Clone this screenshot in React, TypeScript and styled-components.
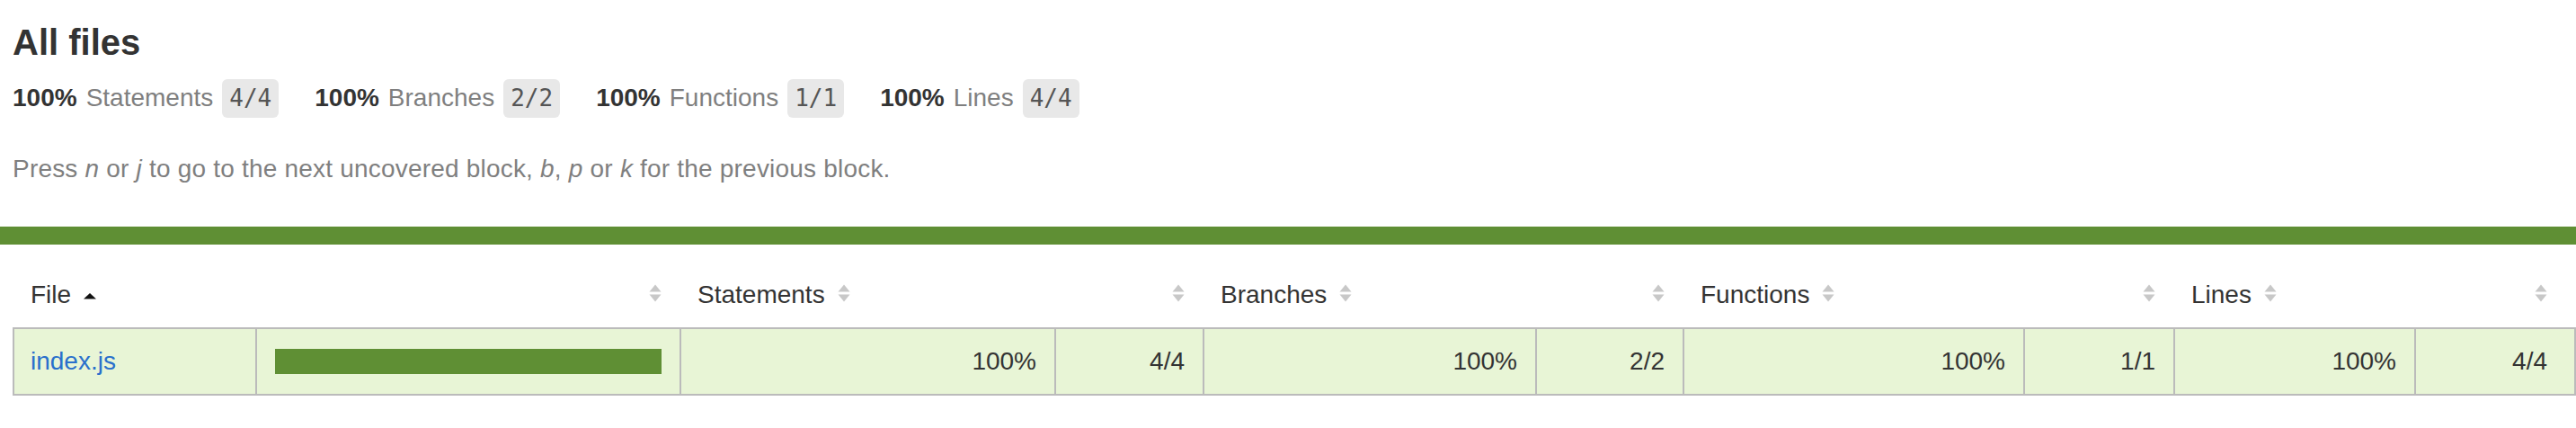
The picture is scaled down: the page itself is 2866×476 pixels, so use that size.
import React from "react";
import styled, { createGlobalStyle } from "styled-components";

const GREEN = "rgb(95,143,52)";
const ROW_BG = "rgb(232,245,214)";
const BORDER = "#bbb";
const COLS = "270px 472px 417px 165px 370px 164px 379px 167px 268px 166px";

const GlobalStyle = createGlobalStyle`
  html, body { margin: 0; padding: 0; background: #fff; }
  body {
    font-family: "Liberation Sans", Arial, Helvetica, sans-serif;
    font-size: 28px;
    line-height: 32px;
    color: #333;
  }
  *, *::before, *::after { box-sizing: border-box; }
`;

const Page = styled.div`
  width: 2866px;
`;

const Summary = styled.div`
  padding: 24px 14px 0 14px;
`;

const Title = styled.h1`
  margin: 0;
  font-size: 40px;
  line-height: 46px;
  font-weight: bold;
  color: #333;
`;

const StatsRow = styled.div`
  display: flex;
  gap: 40px;
  margin-top: 18px;
`;

const StatGroup = styled.div`
  display: flex;
  align-items: baseline;
`;

const StatPct = styled.span`
  font-weight: bold;
  color: #333;
`;

const StatLabel = styled.span`
  margin-left: 10px;
  color: rgb(127, 127, 127);
`;

const Fraction = styled.span`
  margin-left: 10px;
  display: inline-block;
  height: 43px;
  line-height: 43px;
  padding: 0 8px;
  font-family: "DejaVu Sans Mono", "Liberation Mono", monospace;
  font-size: 26px;
  color: #555;
  background: #e8e8e8;
  border-radius: 6px;
`;

const Hint = styled.p`
  margin: 41px 0 0 0;
  color: rgb(127, 127, 127);
  letter-spacing: 0.2px;
  em { font-style: italic; }
`;

const StatusLine = styled.div`
  margin-top: 48px;
  height: 20px;
  background: ${GREEN};
`;

const TableSection = styled.div`
  padding: 20px 0 0 14px;
`;

const HeaderRow = styled.div`
  display: grid;
  grid-template-columns: ${COLS};
  padding: 0 2px;
`;

const HeaderCell = styled.div<{ $align: "left" | "right"; $last?: boolean }>`
  padding: 20px ${(p) => (p.$last ? 20 : 22)}px 20px 18px;
  text-align: ${(p) => p.$align};
  white-space: nowrap;
  color: #333;
`;

const BodyRow = styled.div`
  display: grid;
  grid-template-columns: ${COLS};
  border: 2px solid ${BORDER};
  background: ${ROW_BG};
`;

const Cell = styled.div<{ $align: "left" | "right"; $first?: boolean }>`
  padding: 20px 20px 20px ${(p) => (p.$first ? 18 : 20)}px;
  text-align: ${(p) => p.$align};
  white-space: nowrap;
  border-right: 2px solid ${BORDER};
  &:last-child { border-right: none; }
`;

const FileLink = styled.a`
  color: rgb(42, 112, 204);
  text-decoration: none;
`;

const CoverFill = styled.div`
  margin-top: 2px;
  height: 28px;
  background: ${GREEN};
`;

const SorterIcon = styled.svg`
  display: inline-block;
  margin-left: 14px;
  vertical-align: 1px;
`;

const Sorter = ({ sorted }: { sorted?: boolean }) => (
  <SorterIcon width={14} height={20} viewBox="0 0 14 20" aria-hidden="true">
    {sorted ? (
      <path d="M0 16.5 L7 10 L14 16.5 Z" fill="#111" />
    ) : (
      <>
        <path d="M0.5 8.5 L7 0.5 L13.5 8.5 Z" fill="#c8c8c8" />
        <path d="M0.5 11.5 L13.5 11.5 L7 19.5 Z" fill="#c8c8c8" />
      </>
    )}
  </SorterIcon>
);

type Metric = { name: string; pct: string; frac: string };

const metrics: Metric[] = [
  { name: "Statements", pct: "100%", frac: "4/4" },
  { name: "Branches", pct: "100%", frac: "2/2" },
  { name: "Functions", pct: "100%", frac: "1/1" },
  { name: "Lines", pct: "100%", frac: "4/4" },
];

export default function App() {
  return (
    <Page>
      <GlobalStyle />
      <Summary>
        <Title>All files</Title>
        <StatsRow>
          {metrics.map((m) => (
            <StatGroup key={m.name}>
              <StatPct>{m.pct}</StatPct>
              <StatLabel>{m.name}</StatLabel>
              <Fraction>{m.frac}</Fraction>
            </StatGroup>
          ))}
        </StatsRow>
        <Hint>
          Press <em>n</em> or <em>j</em> to go to the next uncovered block, <em>b</em>,{" "}
          <em>p</em> or <em>k</em> for the previous block.
        </Hint>
      </Summary>
      <StatusLine />
      <TableSection>
        <HeaderRow>
          <HeaderCell $align="left">
            File
            <Sorter sorted />
          </HeaderCell>
          <HeaderCell $align="right">
            <Sorter />
          </HeaderCell>
          {metrics.map((m, i) => (
            <React.Fragment key={m.name}>
              <HeaderCell $align="left">
                {m.name}
                <Sorter />
              </HeaderCell>
              <HeaderCell $align="right" $last={i === metrics.length - 1}>
                <Sorter />
              </HeaderCell>
            </React.Fragment>
          ))}
        </HeaderRow>
        <BodyRow>
          <Cell $align="left" $first>
            <FileLink href="#index.js">index.js</FileLink>
          </Cell>
          <Cell $align="left">
            <CoverFill />
          </Cell>
          {metrics.map((m) => (
            <React.Fragment key={m.name}>
              <Cell $align="right">{m.pct}</Cell>
              <Cell $align="right">{m.frac}</Cell>
            </React.Fragment>
          ))}
        </BodyRow>
      </TableSection>
    </Page>
  );
}
